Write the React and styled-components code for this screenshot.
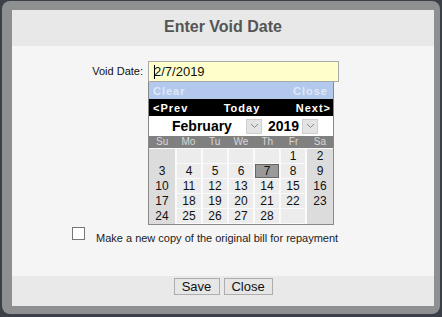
import React from "react";
import styled, { createGlobalStyle } from "styled-components";

const GlobalStyle = createGlobalStyle`
  body {
    margin: 0;
    background: #3b3f47;
    font-family: "Liberation Sans", Arial, sans-serif;
  }
`;

const days = [
  [null, null, null, null, null, 1, 2],
  [3, 4, 5, 6, 7, 8, 9],
  [10, 11, 12, 13, 14, 15, 16],
  [17, 18, 19, 20, 21, 22, 23],
  [24, 25, 26, 27, 28, null, null],
];

const weekNames = ["Su", "Mo", "Tu", "We", "Th", "Fr", "Sa"];

const Chevron = () => (
  <svg width="9" height="6" viewBox="0 0 9 6">
    <path d="M1 1 L4.5 4.5 L8 1" fill="none" stroke="#888" strokeWidth="1" />
  </svg>
);

const App = () => {
  return (
    <Screen>
      <GlobalStyle />
      <Frame>
        <Dialog>
          <Header>Enter Void Date</Header>
          <Body>
            <FieldRow>
              <Label>Void Date:</Label>
              <FieldCol>
                <DateInput>
                  <Caret />
                  2/7/2019
                </DateInput>
                <Calendar>
                  <ClearBar>
                    <span>Clear</span>
                    <span>Close</span>
                  </ClearBar>
                  <NavBar>
                    <span>&lt;Prev</span>
                    <span>Today</span>
                    <span>Next&gt;</span>
                  </NavBar>
                  <SelectRow>
                    <SelectText width="74px">February</SelectText>
                    <ArrowBox>
                      <Chevron />
                    </ArrowBox>
                    <SelectText width="34px">2019</SelectText>
                    <ArrowBox>
                      <Chevron />
                    </ArrowBox>
                  </SelectRow>
                  <WeekHead>
                    {weekNames.map((w) => (
                      <span key={w}>{w}</span>
                    ))}
                  </WeekHead>
                  <DayGrid>
                    {days.map((row, ri) =>
                      row.map((d, ci) => (
                        <Day
                          key={ri + "-" + ci}
                          weekend={ci === 0 || ci === 6}
                          selected={d === 7}
                        >
                          {d}
                        </Day>
                      ))
                    )}
                  </DayGrid>
                </Calendar>
              </FieldCol>
            </FieldRow>
            <CheckRow>
              <Box />
              <CheckText>Make a new copy of the original bill for repayment</CheckText>
            </CheckRow>
          </Body>
          <Footer>
            <Button width="46px">Save</Button>
            <Button width="49px">Close</Button>
          </Footer>
        </Dialog>
      </Frame>
    </Screen>
  );
};

const Screen = styled.div`
  width: 442px;
  height: 317px;
  padding: 1px 2px 0 2px;
  box-sizing: border-box;
  overflow: hidden;
`;

const Frame = styled.div`
  width: 438px;
  height: 313px;
  box-sizing: border-box;
  padding: 9px 6px 7px 10px;
  background: #8e8f91;
  border-radius: 8px;
`;

const Dialog = styled.div`
  width: 422px;
  height: 296px;
  display: flex;
  flex-direction: column;
  background: #f5f5f5;
`;

const Header = styled.div`
  height: 36px;
  flex: none;
  background: #e8e8e8;
  color: #555;
  font-size: 16px;
  font-weight: bold;
  display: flex;
  align-items: center;
  justify-content: center;
  padding-bottom: 3px;
  box-sizing: border-box;
`;

const Body = styled.div`
  flex: 1;
  padding-top: 15px;
  box-sizing: border-box;
`;

const FieldRow = styled.div`
  display: flex;
  gap: 5px;
`;

const Label = styled.div`
  width: 131px;
  text-align: right;
  font-size: 11px;
  color: #111;
  line-height: 21px;
`;

const FieldCol = styled.div`
  display: flex;
  flex-direction: column;
`;

const DateInput = styled.div`
  width: 191px;
  height: 21px;
  box-sizing: border-box;
  border: 1px solid #a9a9a9;
  background: #ffffcc;
  font-size: 13px;
  color: #111;
  padding-left: 5px;
  line-height: 19px;
  display: flex;
  align-items: center;
`;

const Caret = styled.span`
  width: 1px;
  height: 14px;
  background: #000;
  margin-right: -1px;
`;

const Calendar = styled.div`
  width: 186px;
  border: 1px solid #888;
  border-top: none;
  box-sizing: border-box;
  background: #f5f5f5;
`;

const ClearBar = styled.div`
  height: 17px;
  background: #b3c8ed;
  color: #dfe7f6;
  font-size: 11px;
  font-weight: bold;
  letter-spacing: 1px;
  display: flex;
  justify-content: space-between;
  align-items: center;
  padding: 0 5px 0 4px;
`;

const NavBar = styled.div`
  height: 17px;
  background: #000;
  color: #fff;
  font-size: 11px;
  font-weight: bold;
  letter-spacing: 1px;
  display: flex;
  justify-content: space-between;
  align-items: center;
  padding: 0 2px 0 4px;
`;

const SelectRow = styled.div`
  height: 20px;
  background: #fff;
  display: flex;
  align-items: center;
  padding-left: 23px;
`;

const SelectText = styled.span`
  width: ${(props) => props.width};
  font-size: 14px;
  font-weight: bold;
  color: #000;
`;

const ArrowBox = styled.span`
  width: 16px;
  height: 15px;
  margin-right: 6px;
  background: #e3e3e3;
  border: 1px solid #cfcfcf;
  box-sizing: border-box;
  display: flex;
  align-items: center;
  justify-content: center;
`;

const WeekHead = styled.div`
  height: 12px;
  background: #808080;
  color: #d8d8d8;
  font-size: 10px;
  line-height: 12px;
  display: grid;
  grid-template-columns: repeat(7, 1fr);
  text-align: center;
`;

const DayGrid = styled.div`
  display: grid;
  grid-template-columns: 26px repeat(5, 1fr) 26px;
  grid-auto-rows: 14px;
  gap: 1px 2px;
  padding: 1px 0 1px 0;
  background: #fafafa;
`;

const Day = styled.div`
  background: ${(props) =>
    props.selected ? "#999" : props.weekend ? "#dcdcdc" : "#ececec"};
  box-shadow: ${(props) => (props.weekend ? "0 1px 0 #dcdcdc" : "none")};
  border: ${(props) => (props.selected ? "1px solid #666" : "none")};
  box-sizing: border-box;
  font-size: 12px;
  color: #111;
  text-align: center;
  line-height: ${(props) => (props.selected ? "12px" : "14px")};
`;

const CheckRow = styled.div`
  display: flex;
  align-items: center;
  padding-left: 60px;
  margin-top: 1px;
  gap: 11px;
`;

const Box = styled.div`
  width: 13px;
  height: 13px;
  box-sizing: border-box;
  border: 1px solid #777;
  background: #fff;
  margin-bottom: 3px;
`;

const CheckText = styled.span`
  font-size: 11px;
  color: #222;
  margin-top: 6px;
`;

const Footer = styled.div`
  height: 30px;
  flex: none;
  background: #e9e9e9;
  display: flex;
  justify-content: center;
  align-items: flex-start;
  padding-top: 2px;
  gap: 4px;
  box-sizing: border-box;
`;

const Button = styled.button`
  width: ${(props) => props.width};
  height: 17px;
  padding: 0;
  font-family: "Liberation Sans", Arial, sans-serif;
  font-size: 13px;
  color: #111;
  background: #e6e6e6;
  border: 1px solid #adadad;
  line-height: 15px;
`;

export default App;
